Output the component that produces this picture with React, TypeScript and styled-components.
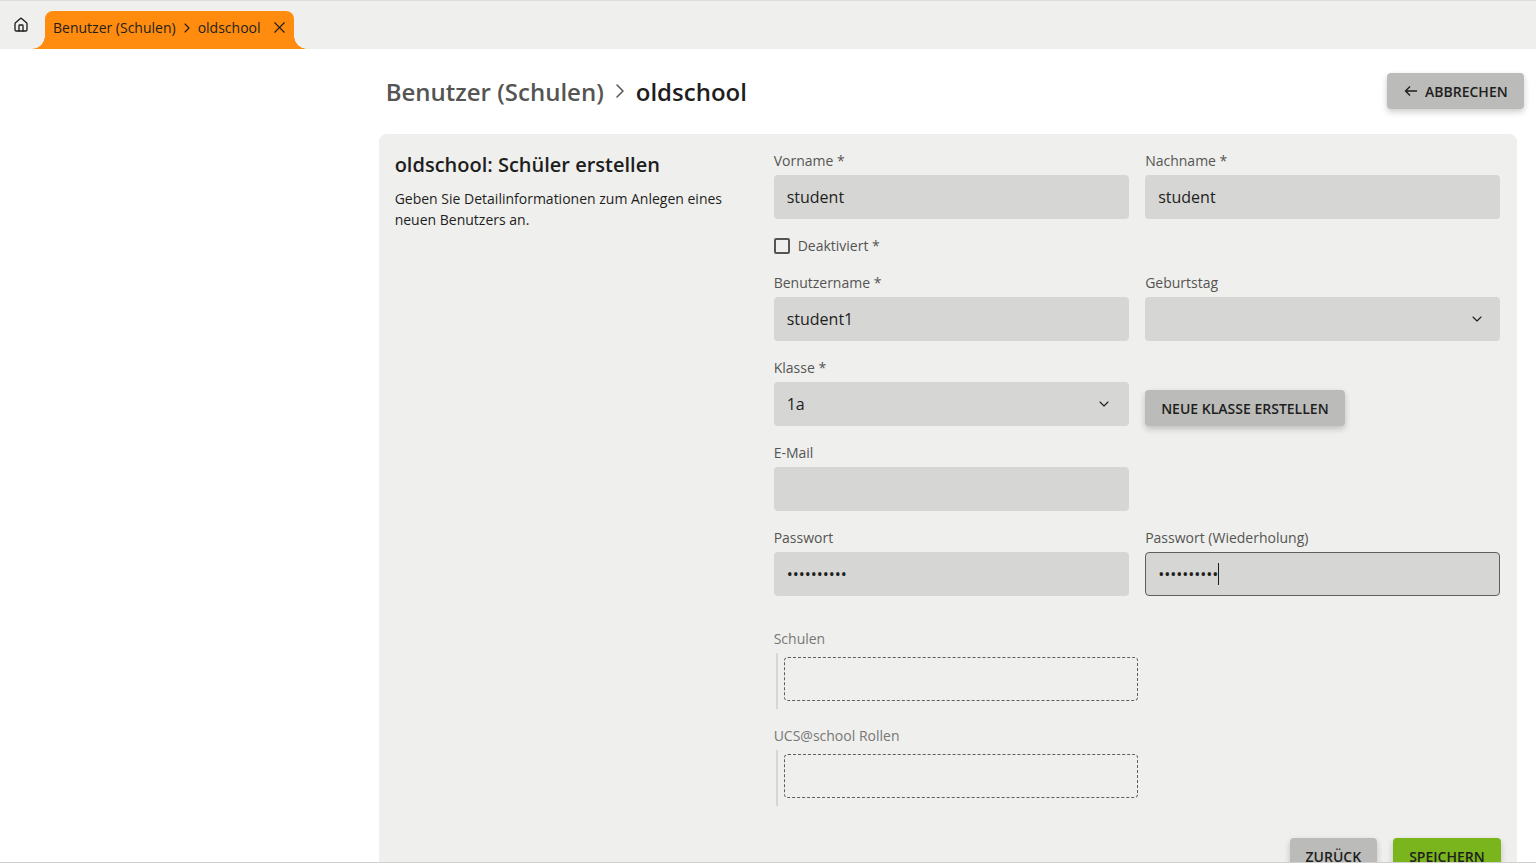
import React from "react";
import styled, { createGlobalStyle } from "styled-components";
import { ChevronDown, ChevronRight, House, X } from "lucide-react";

const GlobalStyle = createGlobalStyle`
  html, body {
    margin: 0;
    height: 100%;
    overflow: hidden;
    background: #ffffff;
    font-family: "Open Sans", "Liberation Sans", sans-serif;
    color: #1e1e1d;
  }
  * { box-sizing: border-box; }
`;

const Page = styled.div`
  height: 865px;
  display: flex;
  flex-direction: column;
  overflow: hidden;
  border-top: 1px solid #dcdcdf;
  background: #ffffff;
`;

const TabBar = styled.header`
  height: 48px;
  flex: none;
  display: flex;
  align-items: flex-end;
  background: #efefed;
`;

const HomeButton = styled.button`
  width: 42px;
  height: 48px;
  margin-right: 3px;
  padding: 0;
  display: flex;
  align-items: center;
  justify-content: center;
  background: none;
  border: 0;
  color: #1e1e1d;
`;

const Tab = styled.div`
  position: relative;
  height: 38px;
  width: 249px;
  display: flex;
  align-items: center;
  padding: 0 8px 5px;
  gap: 3px;
  background: #ff8c0e;
  border-radius: 8px 8px 0 0;
  font-size: 14px;
  color: #1e1e1d;

  &::before,
  &::after {
    content: "";
    position: absolute;
    bottom: 0;
    width: 13px;
    height: 13px;
  }
  &::before {
    left: -13px;
    background: radial-gradient(circle at 0 0, transparent 12.5px, #ff8c0e 13px);
  }
  &::after {
    right: -13px;
    background: radial-gradient(circle at 100% 0, transparent 12.5px, #ff8c0e 13px);
  }
`;

const TabClose = styled.span`
  margin-left: auto;
  margin-right: -2.5px;
  display: flex;
`;

const Main = styled.main`
  flex: 1;
  min-height: 0;
  overflow: hidden;
  padding-left: 378.67px;
`;

const Column = styled.div`
  width: 1138px;
`;

const TitleRow = styled.div`
  height: 85px;
  padding: 24px 0 25px 7px;
  margin-right: -7px;
  display: flex;
  align-items: center;
  justify-content: space-between;
`;

const Title = styled.h1`
  margin: 2px 0 0;
  display: flex;
  align-items: center;
  gap: 4px;
  font-size: 24px;
  line-height: 32px;
  font-weight: 600;
  color: #1e1e1d;
`;

const TitleParent = styled.span`
  color: #555553;
`;

const TitleChevron = styled.span`
  display: flex;
  margin-top: -3px;
  color: #555553;
`;

const Button = styled.button<{ $tone?: "grey" | "green" }>`
  height: 36px;
  padding: 0 16px;
  display: inline-flex;
  align-items: center;
  gap: 6px;
  border: 0;
  border-radius: 4px;
  background: ${(p) => (p.$tone === "green" ? "#7ab51d" : "#bbbbb9")};
  box-shadow: 0 3px 6px rgba(0, 0, 0, 0.2);
  color: #1e1e1d;
  font-family: inherit;
  font-size: 14px;
  font-weight: 600;
  text-transform: uppercase;
  white-space: nowrap;
`;

const Panel = styled.section`
  display: grid;
  grid-template-columns: 379px 1fr;
  padding: 16px;
  background: #efefed;
  border-radius: 8px 8px 0 0;
`;

const Intro = styled.div`
  max-width: 345px;
`;

const IntroTitle = styled.h2`
  margin: 0 0 8px;
  font-size: 20px;
  line-height: 30px;
  font-weight: 600;
`;

const IntroText = styled.p`
  margin: 0;
  font-size: 14px;
  line-height: 21px;
`;

const FormGrid = styled.div`
  display: grid;
  grid-template-columns: 355.5px 355px;
  column-gap: 16px;
  row-gap: 16px;
`;

const Field = styled.div<{ $wide?: boolean }>`
  min-width: 0;
  grid-column: ${(p) => (p.$wide ? "1 / -1" : "auto")};
`;

const Label = styled.label<{ $muted?: boolean }>`
  display: block;
  margin-bottom: 4px;
  font-size: 14px;
  line-height: 21px;
  color: ${(p) => (p.$muted ? "#777775" : "#555553")};
`;

const InputWrap = styled.div`
  position: relative;
`;

const Input = styled.input<{ $focused?: boolean }>`
  display: block;
  width: 100%;
  height: 44px;
  padding: 0 12px;
  background: #d6d6d4;
  border: 1px solid ${(p) => (p.$focused ? "#5f5f5d" : "transparent")};
  border-radius: 4px;
  outline: none;
  color: #1e1e1d;
  font-family: inherit;
  font-size: 16px;
`;

const Caret = styled.span`
  position: absolute;
  left: 73px;
  top: 11px;
  width: 1px;
  height: 22px;
  background: #1e1e1d;
`;

const SelectBox = styled.div<{ $arrowInset: number }>`
  height: 44px;
  padding: 0 ${(p) => p.$arrowInset}px 0 13px;
  display: flex;
  align-items: center;
  justify-content: space-between;
  background: #d6d6d4;
  border-radius: 4px;
  font-size: 16px;
`;

const SelectArrow = styled.span`
  display: flex;
`;

const CheckRow = styled.div`
  grid-column: 1 / -1;
  height: 21px;
  display: flex;
  align-items: center;
  gap: 8px;
  font-size: 14px;
  color: #555553;
`;

const CheckBox = styled.span`
  width: 16px;
  height: 16px;
  border: 2px solid #555553;
  border-radius: 2px;
`;

const ActionCell = styled.div`
  display: flex;
  align-items: flex-end;
`;

const PasswordGap = styled.div`
  grid-column: 1 / -1;
  height: 0;
`;

const MultiBlock = styled.div`
  margin-left: 2px;
  padding: 4px 0 8px 6px;
  border-left: 2px solid #d6d6d4;
`;

const DashedBox = styled.div`
  width: 354px;
  height: 44px;
  border: 1px dashed #5f5f5d;
  border-radius: 4px;
`;

const Footer = styled.div`
  grid-column: 1 / -1;
  display: flex;
  justify-content: flex-end;
  gap: 16px;
  margin-top: 16px;
  margin-right: -0.5px;
`;

const BottomLine = styled.div`
  flex: none;
  height: 3px;
  border-top: 1px solid #cfcfcd;
  background: #ffffff;
`;

const BackArrow = () => (
  <svg width="16" height="16" viewBox="0 0 16 16" fill="none" stroke="currentColor" strokeWidth="1.4">
    <path d="M14 8H2.5M7 3.5 2.5 8 7 12.5" />
  </svg>
);

const App: React.FC = () => {
  return (
    <>
      <GlobalStyle />
      <Page>
        <TabBar>
          <HomeButton aria-label="Startseite">
            <House size={16} strokeWidth={2} />
          </HomeButton>
          <Tab>
            Benutzer (Schulen)
            <ChevronRight size={16} strokeWidth={1.6} />
            oldschool
            <TabClose>
              <X size={19} strokeWidth={1.4} />
            </TabClose>
          </Tab>
        </TabBar>
        <Main>
          <Column>
            <TitleRow>
              <Title>
                <TitleParent>Benutzer (Schulen)</TitleParent>
                <TitleChevron>
                  <ChevronRight size={24} strokeWidth={1.5} />
                </TitleChevron>
                oldschool
              </Title>
              <Button>
                <BackArrow />
                Abbrechen
              </Button>
            </TitleRow>
            <Panel>
              <Intro>
                <IntroTitle>oldschool: Schüler erstellen</IntroTitle>
                <IntroText>Geben Sie Detailinformationen zum Anlegen eines neuen Benutzers an.</IntroText>
              </Intro>
              <FormGrid>
                <Field>
                  <Label>Vorname *</Label>
                  <Input readOnly value="student" />
                </Field>
                <Field>
                  <Label>Nachname *</Label>
                  <Input readOnly value="student" />
                </Field>
                <CheckRow>
                  <CheckBox />
                  Deaktiviert *
                </CheckRow>
                <Field>
                  <Label>Benutzername *</Label>
                  <Input readOnly value="student1" />
                </Field>
                <Field>
                  <Label>Geburtstag</Label>
                  <SelectBox $arrowInset={15}>
                    <span />
                    <SelectArrow>
                      <ChevronDown size={16} strokeWidth={1.6} />
                    </SelectArrow>
                  </SelectBox>
                </Field>
                <Field>
                  <Label>Klasse *</Label>
                  <SelectBox $arrowInset={17}>
                    1a
                    <SelectArrow>
                      <ChevronDown size={16} strokeWidth={1.6} />
                    </SelectArrow>
                  </SelectBox>
                </Field>
                <ActionCell>
                  <Button>Neue Klasse erstellen</Button>
                </ActionCell>
                <Field>
                  <Label>E-Mail</Label>
                  <Input readOnly value="" />
                </Field>
                <div />
                <Field>
                  <Label>Passwort</Label>
                  <Input readOnly type="password" value="student123" />
                </Field>
                <Field>
                  <Label>Passwort (Wiederholung)</Label>
                  <InputWrap>
                    <Input readOnly $focused type="password" value="student123" />
                    <Caret />
                  </InputWrap>
                </Field>
                <PasswordGap />
                <Field $wide>
                  <Label $muted>Schulen</Label>
                  <MultiBlock>
                    <DashedBox />
                  </MultiBlock>
                </Field>
                <Field $wide>
                  <Label $muted>UCS@school Rollen</Label>
                  <MultiBlock>
                    <DashedBox />
                  </MultiBlock>
                </Field>
                <Footer>
                  <Button>Zurück</Button>
                  <Button $tone="green">Speichern</Button>
                </Footer>
              </FormGrid>
            </Panel>
          </Column>
        </Main>
        <BottomLine />
      </Page>
    </>
  );
};

export default App;
